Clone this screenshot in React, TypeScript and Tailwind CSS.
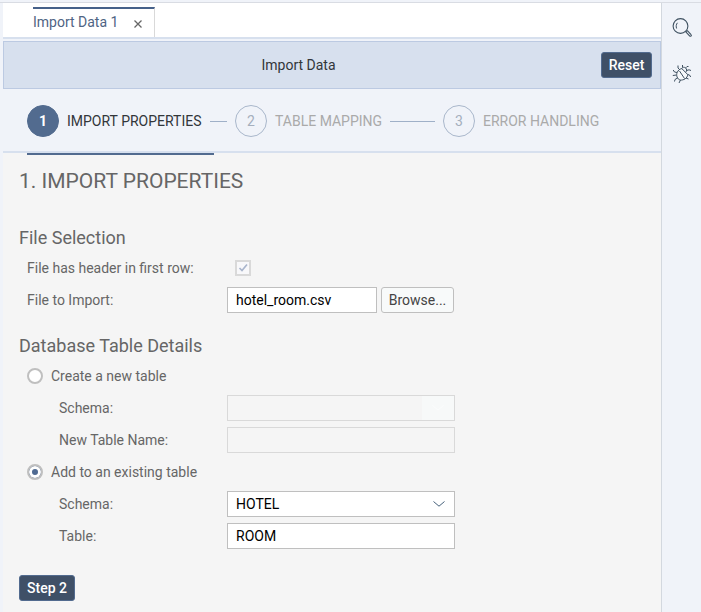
import { useState, type ReactNode } from "react";

const steps = ["IMPORT PROPERTIES", "TABLE MAPPING", "ERROR HANDLING"];

function SearchIcon() {
  return (
    <svg width="20" height="20" viewBox="0 0 20 20" fill="none" stroke="#3f5161" aria-hidden="true">
      <circle cx="8.5" cy="8" r="7.4" strokeWidth="1.1" />
      <path d="M4.6 10.5C3.8 8.4 4.2 6.4 5.4 4.8" strokeWidth="1" />
      <path d="M13.6 13.6l4.200 4.600M15.400 12.600l3.900 4.200M13.600 13.800l1.800-1.200M17.800 18.200q1.500.5 1.600-1.300" strokeWidth="1.100" />
    </svg>
  );
}

function BugIcon() {
  return (
    <svg width="20" height="20" viewBox="0 0 20 20" fill="none" stroke="#3f5161" strokeWidth="1" aria-hidden="true">
      <path d="M5.300 8.300C3.800 11 5.200 15.500 8.300 16c3 .5 7.400-1.800 7.400-5.500L9.800 4.600C7.500 5 6 6.500 5.300 8.300Z" fill="#f7f9fc" />
      <path d="M7.500 7l5 7.500M9.800 4.600c.8-1.600 2.600-1.700 3.800-.6s1.700 2.900 0 4.200" />
      <path d="M13.500 4l1.500-1.500h1.500M14.500 6.500l2.500-.7 2 .7M15.500 10.500l2 .5 1.200 2M14 14l2.500 1M8.500 16l-1.500 3M5.500 14l-2.500 1.500-.5 2M4.500 11L.8 11.500M5 8.500L2.500 8 1.200 6M7.500 5.500L6 4V1.500M10.500 3.500V1" />
    </svg>
  );
}

function Chevron({ className }: { className: string }) {
  return (
    <svg width="12" height="6" viewBox="0 0 12 6" fill="none" stroke="currentColor" className={className} aria-hidden="true">
      <path d="M.5.5L6 5.200 11.500.5" strokeWidth="1" />
    </svg>
  );
}

function Row({ label, id, indent, children }: { label: string; id: string; indent?: boolean; children: ReactNode }) {
  return (
    <div className="flex h-8 items-center pl-2">
      <label htmlFor={id} className={indent ? "w-50 pl-8" : "w-50"}>{label}</label>
      {children}
    </div>
  );
}

const field = "h-[26px] border border-[#bfbfbf] bg-white px-2 text-black rounded-none outline-none";
const disabledField = "h-[26px] w-57 border border-[#d9d9d9] bg-[#f5f5f5] px-2 rounded-none";
const radio = "size-4 appearance-none rounded-full border-2 border-[#bfbfbf] bg-white checked:bg-[#4f6a92] checked:shadow-[inset_0_0_0_3px_#fff]";
const primary = "h-[26px] rounded-[3px] border border-[#526b8f] bg-[#3f5067] text-sm font-medium text-white";

export default function App() {
  const [existing, setExisting] = useState(true);
  return (
    <div className="flex min-h-screen flex-col bg-[#f0f3f9] pt-0.5 font-[Roboto,'Open_Sans',sans-serif] text-sm text-[#666]">
      <div className="flex flex-1 border-t border-[#d9dce3]">
        <main className="ml-[3px] flex flex-1 flex-col">
          <nav className="flex h-9 items-end border-b-2 border-[#d7e0ee] bg-white pl-[30px]">
            <div className="mt-1 flex h-[30px] w-[122px] items-center justify-between border-t-2 border-r border-t-[#46618a] border-r-[#d9d9d9] pr-3">
              <a href="#import" className="pb-0.5 text-[#4f6484]">Import Data 1</a>
              <button aria-label="Close tab" className="pt-0.5">
                <svg width="8" height="8" viewBox="0 0 8 8" stroke="#666" strokeWidth="1.300" aria-hidden="true">
                  <path d="M.5.5l7 7M7.500.5l-7 7" />
                </svg>
              </button>
            </div>
          </nav>
          <header className="mt-0.5 flex h-12 items-center border border-[#bccae2] bg-[#d7e0ee] pr-2">
            <h1 className="flex-1 pr-2 text-center text-[#32363a]">Import Data</h1>
            <button className={`${primary} w-[51px]`}>Reset</button>
          </header>
          <ol className="flex h-16 items-center border-b-2 border-[#d7e0ee] pt-0.5 pl-6">
            {steps.map((name, i) => (
              <li key={name} className={`flex items-center gap-2 whitespace-nowrap ${i < 2 ? "w-52 pr-2" : ""} ${i ? "text-[#aaa]" : "text-[#32363a]"}`}>
                <span className={`flex size-8 shrink-0 items-center justify-center rounded-full border ${i ? "border-[#a9b7cb] text-[#a5afbd]" : "border-[#526b8f] bg-[#526b8f] font-bold text-white"}`}>
                  {i + 1}
                </span>
                {name}
                {i < 2 && <span className="h-px flex-1 bg-[#9fb0c8]" />}
              </li>
            ))}
          </ol>
          <form className="flex-1 bg-[#f5f5f5] px-4" onSubmit={(e) => e.preventDefault()}>
            <div className="ml-2 h-0.5 w-[187px] bg-[#526b8f]" />
            <h2 className="mt-3 text-[21px] leading-7">1. IMPORT PROPERTIES</h2>
            <h3 className="mt-[29px] text-lg leading-7">File Selection</h3>
            <Row label="File has header in first row:" id="header">
              <span className="relative ml-2 size-4">
                <input id="header" type="checkbox" checked disabled className="block size-4 appearance-none border-2 border-[#d9d9d9] bg-[#f8f8fa]" />
                <svg width="16" height="16" viewBox="0 0 16 16" fill="none" stroke="#a9b5cc" strokeWidth="1.700" className="pointer-events-none absolute inset-0" aria-hidden="true">
                  <path d="M4.500 8l2.500 2.500L12 4.500" />
                </svg>
              </span>
            </Row>
            <Row label="File to Import:" id="file">
              <input id="file" defaultValue="hotel_room.csv" className={`${field} w-[150px]`} />
              <button className="ml-1 h-[26px] w-[73px] rounded-[3px] border border-[#bfbfbf] bg-[#f8fafa] text-[#444]">Browse...</button>
            </Row>
            <h3 className="mt-4 text-lg leading-7">Database Table Details</h3>
            <label className="flex h-8 items-center gap-2 pl-2">
              <input type="radio" name="target" checked={!existing} onChange={() => setExisting(false)} className={radio} />
              Create a new table
            </label>
            <Row label="Schema:" id="new-schema" indent>
              <span className="relative">
                <select id="new-schema" disabled className={`${disabledField} block appearance-none opacity-100`} />
                <span className="pointer-events-none absolute inset-y-px right-px flex w-8 items-center justify-center bg-[#f7f9f9]">
                  <Chevron className="text-[#fbfcfc]" />
                </span>
              </span>
            </Row>
            <Row label="New Table Name:" id="new-table" indent>
              <input id="new-table" disabled className={disabledField} />
            </Row>
            <label className="flex h-8 items-center gap-2 pl-2">
              <input type="radio" name="target" checked={existing} onChange={() => setExisting(true)} className={radio} />
              Add to an existing table
            </label>
            <Row label="Schema:" id="schema" indent>
              <span className="relative">
                <select id="schema" className={`${field} block w-57 appearance-none`}>
                  <option>HOTEL</option>
                </select>
                <Chevron className="pointer-events-none absolute top-[10px] right-[10px] text-[#46617a]" />
              </span>
            </Row>
            <Row label="Table:" id="table" indent>
              <input id="table" defaultValue="ROOM" className={`${field} w-57`} />
            </Row>
            <button className={`${primary} mt-[23px] w-14`}>Step 2</button>
          </form>
        </main>
        <aside className="flex w-10 flex-col items-center gap-[26px] border-l border-[#d3d8df] pt-[15px]">
          <button aria-label="Search"><SearchIcon /></button>
          <button aria-label="Debug"><BugIcon /></button>
        </aside>
      </div>
    </div>
  );
}
